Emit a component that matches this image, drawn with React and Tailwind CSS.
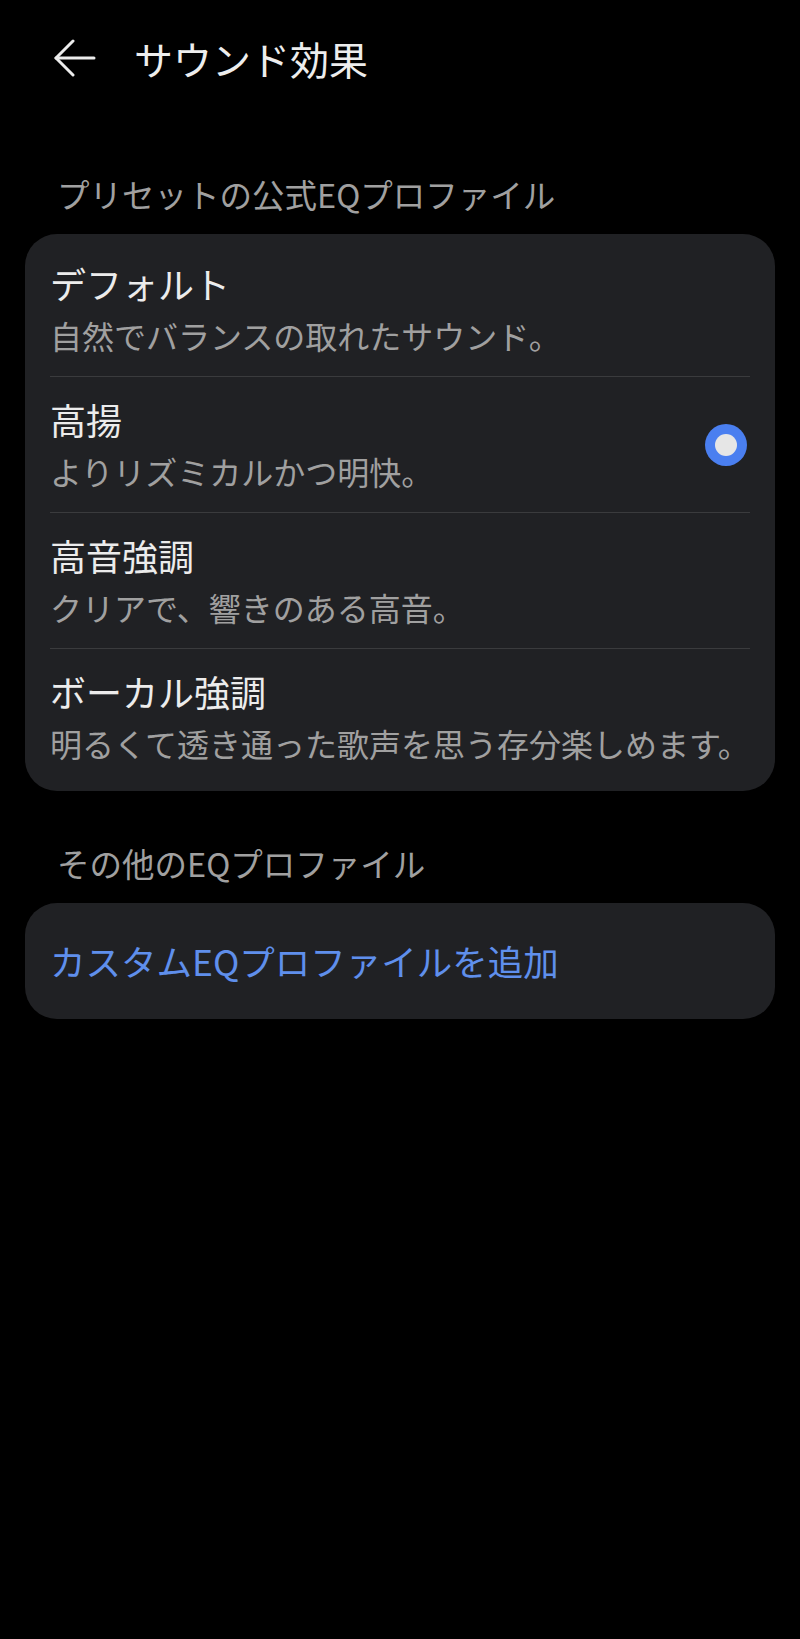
const presets = [
  { title: 'デフォルト', desc: '自然でバランスの取れたサウンド。' },
  { title: '高揚', desc: 'よりリズミカルかつ明快。', selected: true },
  { title: '高音強調', desc: 'クリアで、響きのある高音。' },
  { title: 'ボーカル強調', desc: '明るくて透き通った歌声を思う存分楽しめます。' },
];

const font = { fontFamily: '"Noto Sans CJK JP", "Noto Sans", sans-serif' };

const BackArrow = () => (
  <svg width="42" height="38" viewBox="0 0 42 38" fill="none" stroke="#ececec" strokeWidth="3" strokeLinecap="round" strokeLinejoin="round">
    <path d="M19 2 2 19l17 17" />
    <path d="M2 19h38" />
  </svg>
);

const Radio = () => (
  <div className="w-[42px] h-[42px] rounded-full bg-[#4a7ff0] flex items-center justify-center shrink-0 mr-[3px]">
    <div className="w-[22px] h-[22px] rounded-full bg-[#e6e6e6]" />
  </div>
);

export default function App() {
  return (
    <div className="min-h-[1639px] w-full bg-black" style={font}>
      {/* Top bar */}
      <div className="h-[116px] flex items-center pl-[54px]">
        <BackArrow />
        <h1 className="ml-[38px] text-[39px] leading-[52px] text-[#ededed] font-normal">サウンド効果</h1>
      </div>

      {/* Preset profiles */}
      <div className="mt-[56px] px-[57px] text-[32.5px] leading-[44px] text-[#a0a0a0]">
        プリセットの公式EQプロファイル
      </div>
      <div className="mt-[18px] mx-[25px] rounded-[32px] bg-[#202124] px-[25px] py-[7px]">
        {presets.map((p, i) => (
          <div key={p.title}>
            {i > 0 && <div className="h-px bg-[#3a3b3d]" />}
            <div className="flex items-center pt-[16px] pb-[15px]">
              <div className="flex-1 min-w-0">
                <div className="text-[36px] leading-[52px] text-[#ececec] whitespace-nowrap">{p.title}</div>
                <div className="text-[32px] leading-[52px] text-[#a0a0a0] whitespace-nowrap">{p.desc}</div>
              </div>
              {p.selected && <Radio />}
            </div>
          </div>
        ))}
      </div>

      {/* Other profiles */}
      <div className="mt-[50px] px-[57px] text-[32.5px] leading-[44px] text-[#a0a0a0]">
        その他のEQプロファイル
      </div>
      <div className="mt-[18px] mx-[25px] h-[116px] rounded-[32px] bg-[#202124] px-[25px] flex items-center">
        <span className="text-[35.5px] leading-[52px] text-[#5f8fec]">カスタムEQプロファイルを追加</span>
      </div>
    </div>
  );
}
